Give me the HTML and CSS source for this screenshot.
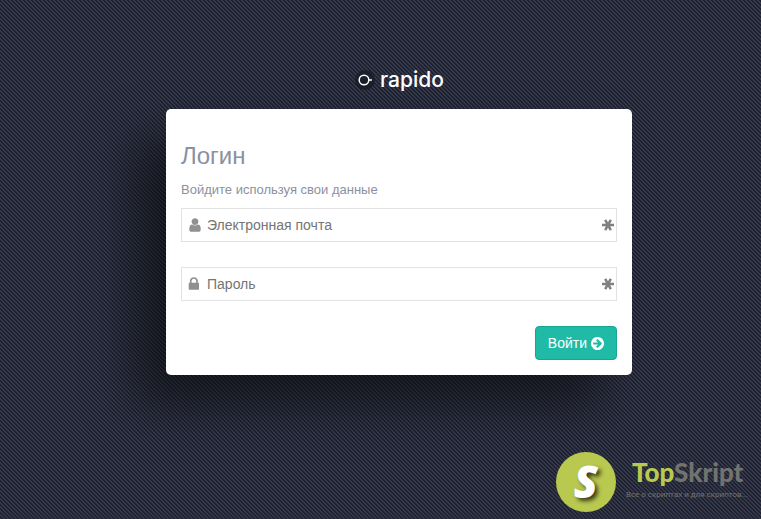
FILE: index.html
```html
<!DOCTYPE html>
<html lang="ru">

<head>
    <meta charset="UTF-8">
    <meta name="viewport" content="width=device-width, initial-scale=1.0">
    <title>Rapido - Логин</title>
    <link rel="stylesheet" href="styles.css">
</head>

<body>
    <main class="main-login">
        <div class="logo">
            <svg class="logo_mark" viewBox="0 0 24 24">
                <circle class="logo_disc" cx="11" cy="12" r="10" />
                <circle cx="10" cy="12" r="4.8" />
                <path d="M15 12h3" />
            </svg>
            <span>rapido</span>
        </div>

        <!-- форма входа -->
        <div class="box-login">
            <h3>Логин</h3>
            <p>Войдите используя свои данные</p>
            <form class="form-login">
                <div class="input-icon">
                    <svg class="icon" viewBox="0 0 1792 1792">
                        <path d="M1536 1399q0 109-62.5 187t-150.5 78h-854q-88 0-150.5-78t-62.5-187q0-85 8.5-160.5t31.5-152 58.5-131 94-89 134.5-34.5q131 128 313 128t313-128q76 0 134.5 34.5t94 89 58.5 131 31.5 152 8.5 160.5zm-256-887q0 159-112.5 271.5t-271.5 112.5-271.5-112.5-112.5-271.5 112.5-271.5 271.5-112.5 271.5 112.5 112.5 271.5z" />
                    </svg>
                    <input type="text" name="username" placeholder="Электронная почта" aria-label="Электронная почта">
                    <svg class="required" viewBox="0 0 12 12">
                        <path d="M0 6h12M3.2 .8l5.6 10.4M8.8 .8l-5.6 10.4" />
                    </svg>
                </div>
                <div class="input-icon">
                    <svg class="icon" viewBox="0 0 1792 1792">
                        <path d="M512 768h512v-192q0-106-75-181t-181-75-181 75-75 181v192zm832 96v576q0 40-28 68t-68 28h-960q-40 0-68-28t-28-68v-576q0-40 28-68t68-28h32v-192q0-184 132-316t316-132 316 132 132 316v192h32q40 0 68 28t28 68z" />
                    </svg>
                    <input type="password" name="password" placeholder="Пароль" aria-label="Пароль">
                    <svg class="required" viewBox="0 0 12 12">
                        <path d="M0 6h12M3.2 .8l5.6 10.4M8.8 .8l-5.6 10.4" />
                    </svg>
                </div>
                <div class="form-actions">
                    <button type="submit" class="btn">Войти
                        <svg viewBox="128 128 1536 1536">
                            <path d="M1413 896q0-27-18-45l-91-91-362-362q-18-18-45-18t-45 18l-91 91q-18 18-18 45t18 45l189 189h-502q-26 0-45 19t-19 45v128q0 26 19 45t45 19h502l-189 189q-19 19-19 45t19 45l91 91q18 18 45 18t45-18l362-362 91-91q18-18 18-45zm251 0q0 209-103 385.5t-279.5 279.5-385.5 103-385.5-103-279.5-279.5-103-385.5 103-385.5 279.5-279.5 385.5-103 385.5 103 279.5 279.5 103 385.5z" />
                        </svg>
                    </button>
                </div>
            </form>
        </div>
    </main>

    <footer class="site-mark">
        <div class="site-mark_badge">S</div>
        <div class="site-mark_text">
            <div class="site-mark_name"><span>Top</span>Skript</div>
            <div class="site-mark_slogan">Все о скриптах и для скриптов...</div>
        </div>
    </footer>
</body>

</html>
```
FILE: styles.css
```css
* {
    margin: 0;
    padding: 0;
    box-sizing: border-box;
}

body {
    min-height: 100vh;
    display: flex;
    flex-direction: column;
    font-family: "Liberation Sans", Arial, sans-serif;
    font-size: 14px;
    line-height: 20px;
    color: #8b91a0;
    background-color: #1e2130;
    /* тонкая диагональная штриховка */
    background-image: linear-gradient(45deg, #36394a 25%, transparent 25%, transparent 50%, #36394a 50%, #36394a 75%, transparent 75%);
    background-size: 4px 4px;
}

.main-login {
    width: 100%;
    max-width: 503px;
    margin: 0 auto;
    padding: 65px 0 0 37px;
}

/* логотип */
.logo {
    display: flex;
    align-items: center;
    justify-content: center;
    height: 30px;
    margin-bottom: 14px;
    font-family: Inter, sans-serif;
    font-size: 21px;
    font-weight: 500;
    line-height: 30px;
    color: #fff;
}

.logo_mark {
    width: 24px;
    height: 24px;
    margin-right: 2px;
    fill: none;
    stroke: #fff;
    stroke-width: 1.5;
}

.logo_mark .logo_disc {
    fill: #171923;
    stroke: none;
    opacity: .7;
}

/* карточка */
.box-login {
    padding: 32px 15px 15px;
    background: #fff;
    border-radius: 5px;
    box-shadow: -30px 30px 50px rgba(0, 0, 0, .5);
}

.box-login h3 {
    margin-bottom: 9px;
    font-size: 24px;
    font-weight: 400;
    line-height: 30px;
}

.box-login p {
    margin-bottom: 8px;
    font-size: 13px;
}

.input-icon {
    position: relative;
    margin-bottom: 25px;
}

.input-icon input {
    display: block;
    width: 100%;
    height: 34px;
    padding: 6px 25px;
    font-family: inherit;
    font-size: 14px;
    color: #858585;
    background: #fff;
    border: 1px solid #e2e2e4;
    outline: none;
}

.input-icon input::placeholder {
    color: #757575;
}

.input-icon .icon {
    position: absolute;
    top: 9px;
    left: 6px;
    width: 16px;
    height: 16px;
    fill: #909090;
}

.input-icon .required {
    position: absolute;
    top: 11px;
    right: 3px;
    width: 12px;
    height: 12px;
    stroke: #808080;
    stroke-width: 2.5;
}

.form-actions {
    display: flex;
    justify-content: flex-end;
}

.btn {
    display: flex;
    align-items: center;
    gap: 4px;
    height: 34px;
    padding: 0 12px;
    font-family: inherit;
    font-size: 14px;
    color: #fff;
    background: #1fbba6;
    border: 1px solid #1ca491;
    border-radius: 4px;
    cursor: pointer;
}

.btn svg {
    width: 13px;
    height: 13px;
    fill: #fff;
}

/* подпись сайта */
.site-mark {
    display: flex;
    align-items: center;
    gap: 10px;
    margin-top: auto;
    margin-left: auto;
    padding: 20px 13px 7px;
}

.site-mark_badge {
    width: 60px;
    height: 60px;
    border-radius: 50%;
    background: #b9c94f;
    font-family: "Open Sans", sans-serif;
    font-size: 44px;
    font-weight: 800;
    font-style: italic;
    line-height: 58px;
    text-align: center;
    color: #fff;
    text-shadow: 3px 3px 4px rgba(0, 0, 0, .7);
}

.site-mark_name {
    padding-left: 6px;
    font-family: Lato, sans-serif;
    font-size: 26px;
    font-weight: 900;
    line-height: 26px;
    color: #72736f;
}

.site-mark_name span {
    color: #b9c94f;
}

.site-mark_slogan {
    font-family: Roboto, sans-serif;
    font-size: 8px;
    line-height: 20px;
    color: #72736f;
}
```
